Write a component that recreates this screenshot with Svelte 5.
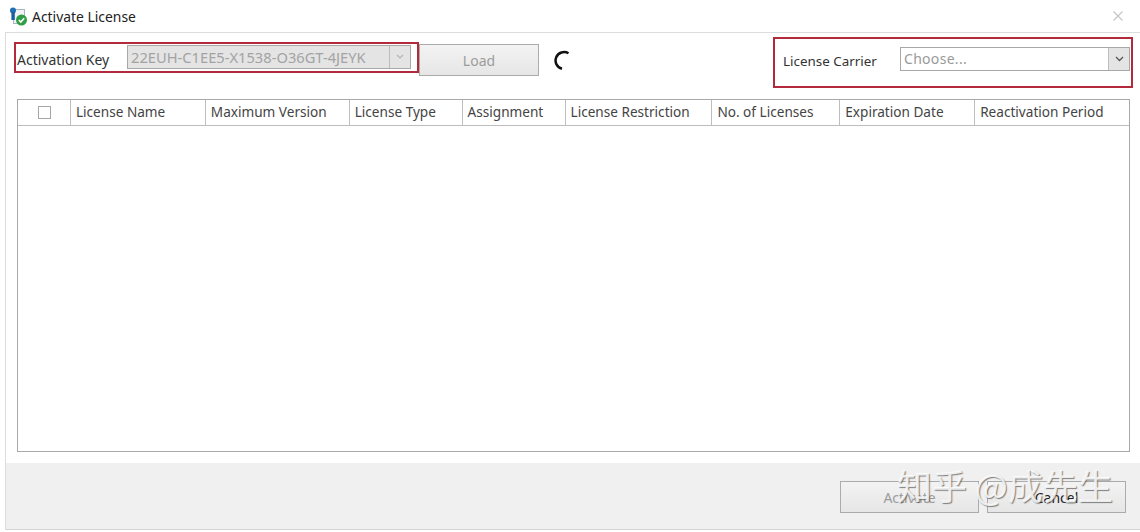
<script>
    const columns = [
        { label: 'License Name', width: 135 },
        { label: 'Maximum Version', width: 144 },
        { label: 'License Type', width: 113 },
        { label: 'Assignment', width: 103 },
        { label: 'License Restriction', width: 147 },
        { label: 'No. of Licenses', width: 128 },
        { label: 'Expiration Date', width: 135 },
        { label: 'Reactivation Period', width: 154 }
    ];
</script>

<div class="dialog">
    <header class="titlebar">
        <svg class="app-icon" width="19" height="19" viewBox="0 0 19 19">
            <rect x="4.5" y="2.5" width="11" height="14" fill="#f1f4f7" stroke="#a9b4c0" />
            <circle cx="4" cy="3.6" r="3" fill="#1f6fb5" />
            <rect x="2.4" y="5" width="3.4" height="8" fill="#1a5f9e" />
            <circle cx="12.5" cy="13" r="5.5" fill="#2f9e44" />
            <path d="M9.8 13l2 2 3.4-3.8" fill="none" stroke="#fff" stroke-width="1.6" />
        </svg>
        <span class="title">Activate License</span>
        <svg class="close" width="10" height="10" viewBox="0 0 10 10">
            <path d="M0.5 0.5l9 9M9.5 0.5l-9 9" stroke="#c4c4c4" stroke-width="1.1" />
        </svg>
    </header>

    <main class="content">
        <div class="toolbar">
            <div class="key-box">
                <span class="field-label">Activation Key</span>
                <div class="combo disabled">
                    <span class="combo-value">22EUH-C1EE5-X1538-O36GT-4JEYK</span>
                    <span class="arrow">
                        <svg width="8" height="6" viewBox="0 0 8 6"><path d="M1 1l3 3 3-3" fill="none" stroke="#b5b5b5" stroke-width="1.2" /></svg>
                    </span>
                </div>
            </div>
            <button class="btn load" disabled>Load</button>
            <svg class="spinner" width="18" height="22" viewBox="0 0 18 22">
                <path d="M14.5 3.3A8.5 8.5 0 1 0 8 18.8" fill="none" stroke="#111" stroke-width="2.5" />
            </svg>
            <div class="carrier-box">
                <span class="field-label">License Carrier</span>
                <div class="combo">
                    <span class="combo-value">Choose...</span>
                    <span class="arrow">
                        <svg width="9" height="6" viewBox="0 0 9 6"><path d="M1 1l3.5 3.5L8 1" fill="none" stroke="#555" stroke-width="1.3" /></svg>
                    </span>
                </div>
            </div>
        </div>

        <div class="table">
            <div class="thead">
                <div class="th check-col"><span class="checkbox"></span></div>
                {#each columns as col}
                    <div class="th" style="width: {col.width}px">{col.label}</div>
                {/each}
            </div>
        </div>

        <footer class="footer">
            <button class="btn action" disabled>Activate</button>
            <button class="btn action cancel">Cancel</button>
        </footer>
    </main>

    <div class="watermark">知乎 @成先生</div>
</div>

<style>
    :global(body) {
        margin: 0;
        background: #fff;
    }
    .dialog {
        position: relative;
        width: 1140px;
        height: 532px;
        overflow: hidden;
        background: #fff;
        font-family: "Noto Sans", "Open Sans", sans-serif;
        font-size: 14px;
        color: #333;
    }
    .titlebar {
        display: flex;
        align-items: center;
        height: 32px;
        padding-left: 9px;
        padding-right: 17px;
    }
    .app-icon {
        margin-right: 4px;
    }
    .title {
        flex: 1;
        font-size: 13.9px;
        color: #222;
    }
    .content {
        display: flex;
        flex-direction: column;
        height: 496px;
        margin-left: 5px;
        border-top: 1px solid #dcdcdc;
        border-left: 1px solid #dcdcdc;
        border-bottom: 1px solid #d4d4d4;
    }
    .toolbar {
        display: flex;
        align-items: flex-start;
        height: 62px;
        padding: 4px 7px 0 8px;
    }
    .key-box {
        display: flex;
        align-items: center;
        box-sizing: border-box;
        width: 405px;
        height: 31px;
        margin-top: 5px;
        padding: 0 6px 0 1px;
        border: 2px solid #b22a3c;
    }
    .field-label {
        white-space: nowrap;
        color: #333;
    }
    .key-box .field-label {
        width: 110px;
        margin-top: 3px;
    }
    .combo {
        display: flex;
        flex: 1;
        align-items: stretch;
        box-sizing: border-box;
        height: 24px;
        border: 1px solid #a8a8a8;
        background: #fff;
        color: #9a9a9a;
    }
    .combo.disabled {
        background: #e4e4e4;
        color: #a3a3a3;
        margin-top: -1px;
    }
    .combo-value {
        flex: 1;
        padding-left: 3px;
        line-height: 21px;
        white-space: nowrap;
        letter-spacing: 0.3px;
    }
    .combo.disabled .combo-value {
        font-size: 14.7px;
        line-height: 23px;
        letter-spacing: 0;
    }
    .arrow {
        display: flex;
        align-items: center;
        justify-content: center;
        width: 20px;
        border-left: 1px solid #bcbcbc;
        background: #e4e4e4;
    }
    .btn {
        box-sizing: border-box;
        border: 1px solid #ababab;
        background: linear-gradient(#f3f3f3, #e6e6e6);
        font: inherit;
        color: #9c9c9c;
        padding: 0;
    }
    .load {
        width: 120px;
        height: 32px;
        margin-top: 7px;
    }
    .spinner {
        margin: 13px 0 0 15px;
    }
    .carrier-box {
        display: flex;
        align-items: center;
        box-sizing: border-box;
        width: 360px;
        height: 51px;
        margin-left: auto;
        padding: 0 1px 0 8px;
        border: 2px solid #b22a3c;
    }
    .carrier-box .field-label {
        width: 117px;
        margin-top: -4px;
        font-size: 13.4px;
    }
    .carrier-box .combo {
        margin-top: -7px;
    }
    .table {
        box-sizing: border-box;
        width: 1113px;
        height: 353px;
        margin-left: 11px;
        border: 1px solid #a9a9a9;
    }
    .thead {
        display: flex;
        height: 25px;
        border-bottom: 1px solid #bdbdbd;
    }
    .th {
        display: flex;
        align-items: center;
        box-sizing: border-box;
        padding: 0 0 2px 5px;
        border-right: 1px solid #bdbdbd;
        font-size: 13.6px;
        white-space: nowrap;
        color: #444;
    }
    .th:last-child {
        border-right: 0;
    }
    .check-col {
        justify-content: center;
        width: 53px;
        padding: 0 0 0 1px;
    }
    .checkbox {
        box-sizing: border-box;
        width: 13px;
        height: 13px;
        border: 1px solid #a6a6a6;
        background: #fff;
    }
    .footer {
        display: flex;
        flex: 1;
        justify-content: flex-end;
        gap: 8px;
        margin-top: 11px;
        padding: 18px 14px 0 0;
        background: #f0f0f0;
    }
    .action {
        width: 139px;
        height: 32px;
    }
    .cancel {
        color: #222;
    }
    .watermark {
        position: absolute;
        left: 897px;
        top: 464px;
        font-family: "Noto Sans CJK SC", sans-serif;
        font-size: 35px;
        line-height: 42px;
        white-space: nowrap;
        color: rgba(255, 255, 255, 0.85);
        text-shadow: 1px 1px 1px rgba(80, 80, 80, 0.7);
    }
</style>
